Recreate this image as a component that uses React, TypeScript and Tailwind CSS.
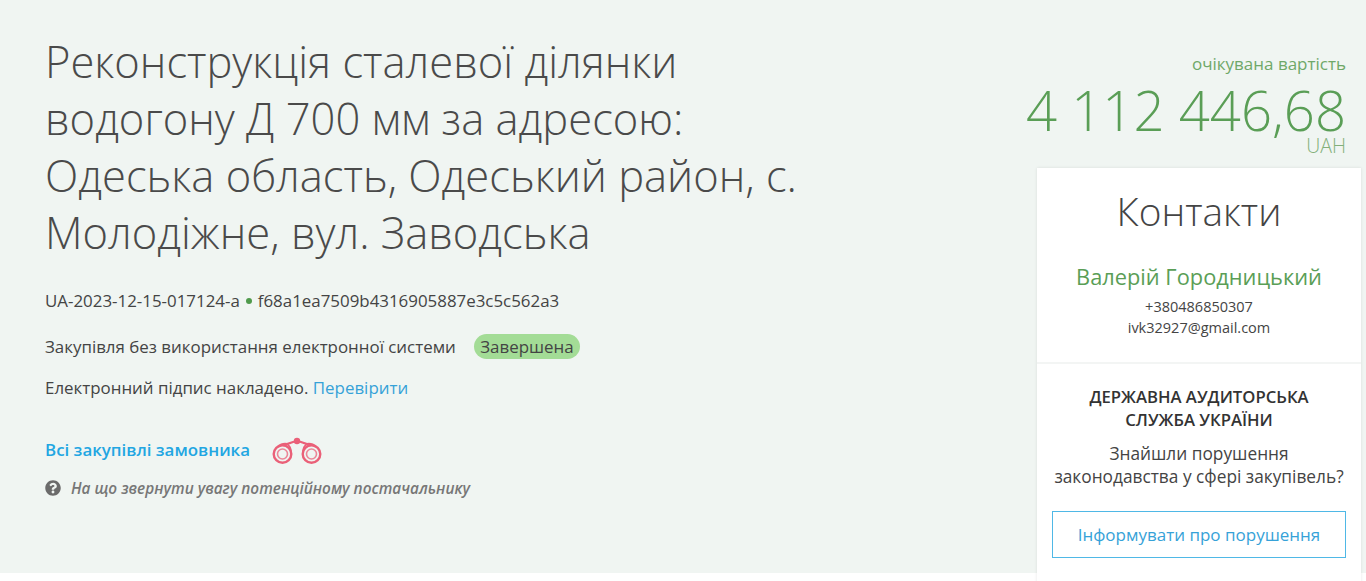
import { FaQuestionCircle } from "react-icons/fa";

function Binoculars() {
  return (
    <svg width="50" height="28" viewBox="0 0 50 28" fill="none" className="shrink-0">
      <g stroke="#ea6078">
        <circle cx="10.5" cy="17" r="8.8" strokeWidth="2.4" />
        <circle cx="10.5" cy="17" r="5" strokeWidth="1.6" opacity="0.75" />
        <circle cx="39.5" cy="17" r="8.8" strokeWidth="2.4" />
        <circle cx="39.5" cy="17" r="5" strokeWidth="1.6" opacity="0.75" />
        <path d="M6 10 C9 7 12 6.500 15 7 L21 5 L25 4 L29 5 L35 7 C38 6.500 41 7 44 10" strokeWidth="2.2" />
        <path d="M15 7 C18 9 19 11 19 15 M35 7 C32 9 31 11 31 15" strokeWidth="1.6" />
      </g>
      <circle cx="25" cy="4" r="3.2" fill="#ea6078" />
    </svg>
  );
}

export default function App() {
  return (
    <div className="h-[581px] overflow-hidden bg-white font-['Open_Sans',sans-serif] text-[#444]">
      <section className="flex h-[573px] justify-between bg-[#f0f5f2] pl-[45px] pr-[5px]">
        <div className="w-[790px] pt-[33px]">
          <h1 className="text-[43.5px] leading-[57px] font-light text-[#4a4a4a]">
            Реконструкція сталевої ділянки водогону Д 700 мм за адресою: Одеська область, Одеський район, с. Молодіжне, вул. Заводська
          </h1>
          <div className="mt-[27px] flex items-center text-[16.9px] leading-[26px]">
            <span>UA-2023-12-15-017124-a</span>
            <span className="mx-[6px] h-[6px] w-[6px] rounded-full bg-[#4f9a4c]" />
            <span>f68a1ea7509b4316905887e3c5c562a3</span>
          </div>
          <div className="mt-[20px] flex items-center text-[16.9px] leading-[26px]">
            <span>Закупівля без використання електронної системи</span>
            <span className="ml-[18px] -translate-y-px rounded-full bg-[#a3dc96] px-[6.500px] leading-[25px]">Завершена</span>
          </div>
          <div className="mt-[15px] text-[16.9px] leading-[26px]">
            Електронний підпис накладено. <span className="text-[#36a2d8]">Перевірити</span>
          </div>
          <div className="mt-[34px] flex items-center">
            <span className="text-[16.9px] leading-[26px] font-semibold text-[#22a6e2]">Всі закупівлі замовника</span>
            <span className="ml-[22px] mt-[2px]"><Binoculars /></span>
          </div>
          <div className="mt-[10px] flex items-center text-[15.35px] leading-[26px] font-semibold italic text-[#777]">
            <FaQuestionCircle className="mr-[10px] h-[16px] w-[16px] text-[#6b6b6b]" />
            На що звернути увагу потенційному постачальнику
          </div>
        </div>
        <div className="flex w-[324px] flex-col items-end">
          <div className="mt-[51px] mr-[15px] text-[17px] leading-[26px] text-[#6fa868]">очікувана вартість</div>
          <div className="mr-[15px] text-[54.5px] leading-[66px] font-light whitespace-nowrap text-[#5a9e56]">4 112 446,68</div>
          <div className="mr-[15px] -mt-[9px] text-[19.5px] leading-[24px] font-light text-[#82b07a]">UAH</div>
          <aside className="mt-[10px] w-[324px] shrink-0 bg-white pb-[30px] text-center shadow-[0_0_3px_rgba(0,0,0,0.1)]">
            <div className="border-b-2 border-[#f3f5f4] pt-[16px] pb-[24px]">
              <h2 className="text-[38.8px] leading-[54px] font-light text-[#444]">Контакти</h2>
              <div className="mt-[24px] text-[21.8px] leading-[30px] text-[#5a9e56]">Валерій Городницький</div>
              <div className="mt-[4px] text-[14.5px] leading-[21px]">+380486850307</div>
              <div className="text-[14.5px] leading-[21px]">ivk32927@gmail.com</div>
            </div>
            <div className="px-[15px] pt-[22px]">
              <div className="text-[16.7px] leading-[22.500px] font-semibold text-[#333]">ДЕРЖАВНА АУДИТОРСЬКА<br />СЛУЖБА УКРАЇНИ</div>
              <div className="mt-[11px] text-[17.3px] leading-[23px]">Знайшли порушення<br /><span className="whitespace-nowrap">законодавства у сфері закупівель?</span></div>
              <div className="mt-[23px] border border-[#4fb8e6] py-[10px] text-[17px] leading-[25px] text-[#36a2d8]">Інформувати про порушення</div>
            </div>
          </aside>
        </div>
      </section>
    </div>
  );
}
